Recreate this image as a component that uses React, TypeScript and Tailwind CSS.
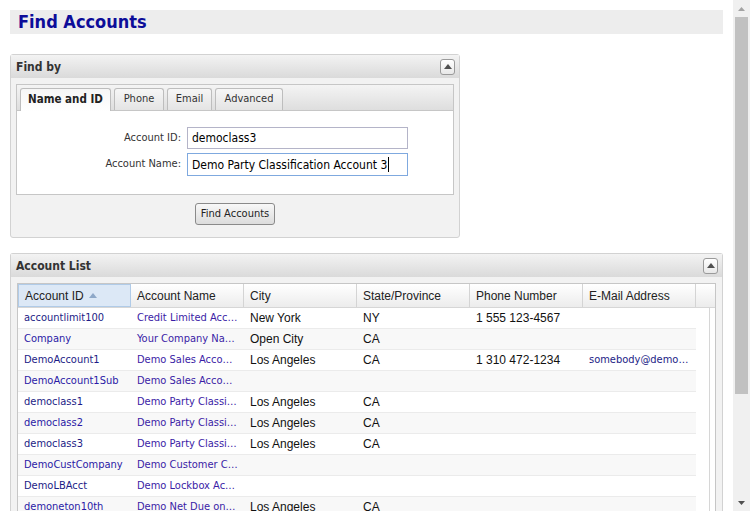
import React from "react";

const TAHOMA = { fontFamily: '"DejaVu Sans Condensed", "DejaVu Sans", sans-serif' };

function CollapseBtn() {
  return (
    <div className="flex h-[16px] w-[15px] items-center justify-center rounded-[3px] border border-[#9a9a9a] bg-gradient-to-b from-white to-[#e8e8e8]">
      <svg width="8" height="5" viewBox="0 0 8 5">
        <polygon points="0,5 8,5 4,0" fill="#505050" />
      </svg>
    </div>
  );
}

function PanelHeader({ title }: { title: string }) {
  return (
    <div className="flex h-[23px] items-center justify-between bg-gradient-to-b from-[#f3f3f3] to-[#dadada] pl-[5px] pr-[4px]">
      <span className="text-[12px] font-bold text-[#333]" style={TAHOMA}>
        {title}
      </span>
      <CollapseBtn />
    </div>
  );
}

type Row = [string, string, string, string, string, string];
const rows: Row[] = [
  ["accountlimit100", "Credit Limited Acc…", "New York", "NY", "1 555 123-4567", ""],
  ["Company", "Your Company Na…", "Open City", "CA", "", ""],
  ["DemoAccount1", "Demo Sales Acco…", "Los Angeles", "CA", "1 310 472-1234", "somebody@demo…"],
  ["DemoAccount1Sub", "Demo Sales Acco…", "", "", "", ""],
  ["democlass1", "Demo Party Classi…", "Los Angeles", "CA", "", ""],
  ["democlass2", "Demo Party Classi…", "Los Angeles", "CA", "", ""],
  ["democlass3", "Demo Party Classi…", "Los Angeles", "CA", "", ""],
  ["DemoCustCompany", "Demo Customer C…", "", "", "", ""],
  ["DemoLBAcct", "Demo Lockbox Ac…", "", "", "", ""],
  ["demoneton10th", "Demo Net Due on…", "Los Angeles", "CA", "", ""],
];

const headers = ["Account ID", "Account Name", "City", "State/Province", "Phone Number", "E-Mail Address"];

export default function App() {
  return (
    <div className="flex h-[511px] w-[750px] overflow-hidden bg-white">
      <div className="flex min-w-0 flex-1 flex-col overflow-hidden px-[10px] pt-[10px]">
        {/* Title */}
        <div className="flex h-[24px] shrink-0 items-center bg-[#ededed] pl-[8px]">
          <h1 className="text-[18px] font-bold leading-none text-[#0d0d99]" style={TAHOMA}>
            Find Accounts
          </h1>
        </div>

        {/* Find by panel */}
        <div className="mt-[20px] w-[450px] shrink-0 rounded-[3px] border border-[#d2d2d2] bg-[#f2f2f2]">
          <PanelHeader title="Find by" />
          <div className="px-[5px] pt-[6px]">
            <div className="border border-[#c6c6c6] bg-white">
              {/* tab strip */}
              <div className="flex h-[26px] items-end gap-[3px] border-b border-[#c6c6c6] bg-gradient-to-b from-[#f4f4f4] to-[#dedede] pl-[3px]">
                <div
                  className="-mb-px flex h-[23px] w-[91px] items-center justify-center rounded-t-[3px] border border-b-0 border-[#bdbdbd] bg-gradient-to-b from-[#f6f6f6] to-white text-[11.5px] font-bold text-[#222]"
                  style={TAHOMA}
                >
                  Name and ID
                </div>
                {[
                  ["Phone", "w-[50px]"],
                  ["Email", "w-[45px]"],
                  ["Advanced", "w-[68px]"],
                ].map(([t, w]) => (
                  <div
                    key={t}
                    className={`flex h-[22px] ${w} items-center justify-center rounded-t-[3px] border border-b-0 border-[#bdbdbd] bg-gradient-to-b from-[#f6f6f6] to-[#e4e4e4] text-[11px] text-[#333]`}
                    style={TAHOMA}
                  >
                    {t}
                  </div>
                ))}
              </div>
              {/* form */}
              <div className="flex h-[83px] flex-col gap-[4px] pt-[16px]" style={TAHOMA}>
                <div className="flex items-center">
                  <label className="w-[170px] pr-[6px] text-right text-[11px] text-[#333]">Account ID:</label>
                  <div className="flex h-[22px] w-[221px] items-center border border-[#b4b4c8] bg-white pl-[4px] text-[12px] text-black">
                    democlass3
                  </div>
                </div>
                <div className="flex items-center">
                  <label className="w-[170px] pr-[6px] text-right text-[11px] text-[#333]">Account Name:</label>
                  <div className="flex h-[23px] w-[221px] items-center border border-[#7fa9df] bg-white pl-[4px] text-[12px] text-black">
                    Demo Party Classification Account 3
                    <span className="ml-px inline-block h-[15px] w-px bg-black" />
                  </div>
                </div>
              </div>
            </div>
            <div className="flex justify-center pb-[12px] pt-[8px]">
              <button
                className="flex h-[22px] w-[80px] items-center justify-center rounded-[3px] border border-[#8a8a8a] bg-gradient-to-b from-[#f8f8f8] to-[#dcdcdc] text-[11px] text-[#222]"
                style={TAHOMA}
              >
                Find Accounts
              </button>
            </div>
          </div>
        </div>

        {/* Account List panel */}
        <div className="mt-[15px] flex-1 rounded-t-[3px] border border-b-0 border-[#d2d2d2] bg-[#f2f2f2]">
          <PanelHeader title="Account List" />
          <div className="px-[6px] pt-[6px]">
            <div className="flex border border-b-0 border-[#c6c6c6] bg-white">
              <div className="w-[678px]">
                {/* header */}
                <div className="flex h-[24px] border-b border-[#d6d6d6] bg-gradient-to-b from-white to-[#ececec]" style={{ fontFamily: '"Liberation Sans", Arial, sans-serif' }}>
                  {headers.map((h, i) => (
                    <div
                      key={h}
                      className={`flex w-[113px] items-center gap-[5px] border-r pl-[6px] text-[12px] text-[#222] ${
                        i === 0 ? "border border-[#b0cbe8] bg-[#dce8f6]" : "border-[#d4d4d4]"
                      }`}
                    >
                      {h}
                      {i === 0 && (
                        <svg width="8" height="5" viewBox="0 0 8 5">
                          <polygon points="0,5 8,5 4,0" fill="#8ea8c8" />
                        </svg>
                      )}
                    </div>
                  ))}
                </div>
                {/* rows */}
                {rows.map((r, ri) => (
                  <div
                    key={ri}
                    className={`flex h-[21px] border-b border-[#ebebeb] ${ri % 2 === 1 ? "bg-[#f8f8f8]" : "bg-white"}`}
                  >
                    {r.map((c, ci) => {
                      const linkish = ci === 0 || ci === 1 || ci === 5;
                      const color =
                        ci === 1 ? "text-[#3a1ca6]" : linkish ? (ri % 2 === 1 ? "text-[#2a1aa6]" : "text-[#1c1c86]") : "text-[#111]";
                      return (
                        <div
                          key={ci}
                          className={`flex w-[113px] items-center overflow-hidden whitespace-nowrap pl-[6px] ${color} ${linkish ? "text-[11px]" : "text-[12px]"}`}
                          style={linkish ? TAHOMA : { fontFamily: '"Liberation Sans", Arial, sans-serif' }}
                        >
                          {c}
                        </div>
                      );
                    })}
                  </div>
                ))}
              </div>
              <div className="flex flex-1 flex-col">
                <div className="h-[24px] border-b border-[#d6d6d6] bg-gradient-to-b from-white to-[#ececec]" />
                <div className="flex flex-1 justify-end">
                  <div className="w-[6px] border-l border-[#d6d6d6]" />
                </div>
              </div>
            </div>
          </div>
        </div>
      </div>

      {/* page scrollbar */}
      <div className="flex w-[17px] shrink-0 flex-col bg-[#f0f0f0]">
        <div className="flex h-[17px] items-center justify-center">
          <svg width="7" height="4" viewBox="0 0 7 4">
            <polygon points="0,4 7,4 3.5,0" fill="#a3a3a3" />
          </svg>
        </div>
        <div className="mx-[2px] h-[377px] bg-[#c1c1c1]" />
        <div className="flex-1" />
        <div className="flex h-[17px] items-center justify-center">
          <svg width="7" height="4" viewBox="0 0 7 4">
            <polygon points="0,0 7,0 3.5,4" fill="#505050" />
          </svg>
        </div>
      </div>
    </div>
  );
}
